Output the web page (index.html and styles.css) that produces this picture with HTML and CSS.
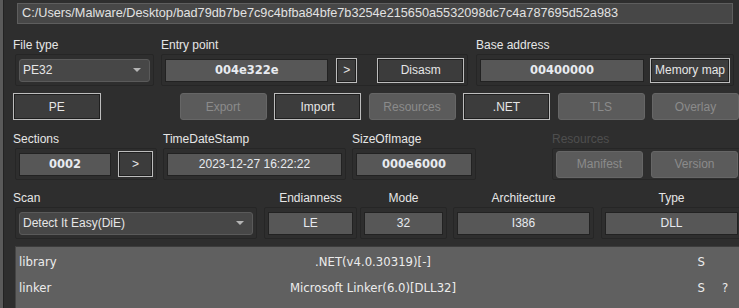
FILE: index.html
```html
<!DOCTYPE html>
<html>
<head>
<meta charset="utf-8">
<link rel="stylesheet" href="styles.css">
</head>
<body>
<div class="app">
  <div class="path">C:/Users/Malware/Desktop/bad79db7be7c9c4bfba84bfe7b3254e215650a5532098dc7c4a787695d52a983</div>

  <div class="row row-b">
    <div class="group g-filetype">
      <div class="lbl">File type</div>
      <div class="frame"><div class="combo combo-ft"><span>PE32</span><span class="arrow"></span></div></div>
    </div>
    <div class="group g-entry">
      <div class="lbl">Entry point</div>
      <div class="frame">
        <div class="val bold w-entry">004e322e</div>
        <div class="btn on b-go">&gt;</div>
        <div class="btn on b-disasm">Disasm</div>
      </div>
    </div>
    <div class="group g-base">
      <div class="lbl">Base address</div>
      <div class="frame">
        <div class="val bold w-entry">00400000</div>
        <div class="btn on b-mem">Memory map</div>
      </div>
    </div>
  </div>

  <div class="row row-c">
    <div class="btn on b-pe">PE</div>
    <div class="btn-grid">
      <div class="btn off">Export</div>
      <div class="btn on">Import</div>
      <div class="btn off">Resources</div>
      <div class="btn on">.NET</div>
      <div class="btn off">TLS</div>
      <div class="btn off">Overlay</div>
    </div>
  </div>

  <div class="row row-d">
    <div class="group g-sections">
      <div class="lbl">Sections</div>
      <div class="frame">
        <div class="val bold w-sec">0002</div>
        <div class="btn on b-sec">&gt;</div>
      </div>
    </div>
    <div class="group g-time">
      <div class="lbl">TimeDateStamp</div>
      <div class="frame"><div class="val w-time">2023-12-27 16:22:22</div></div>
    </div>
    <div class="group g-size">
      <div class="lbl">SizeOfImage</div>
      <div class="frame"><div class="val bold w-size">000e6000</div></div>
    </div>
    <div class="group g-res">
      <div class="lbl dis">Resources</div>
      <div class="frame">
        <div class="btn off b-res">Manifest</div>
        <div class="btn off b-res">Version</div>
      </div>
    </div>
  </div>

  <div class="row row-e">
    <div class="group g-scan">
      <div class="lbl">Scan</div>
      <div class="frame"><div class="combo combo-scan"><span>Detect It Easy(DiE)</span><span class="arrow"></span></div></div>
    </div>
    <div class="group g-endian">
      <div class="lbl center">Endianness</div>
      <div class="frame"><div class="val w-endian">LE</div></div>
    </div>
    <div class="group g-mode">
      <div class="lbl center">Mode</div>
      <div class="frame"><div class="val w-mode">32</div></div>
    </div>
    <div class="group g-arch">
      <div class="lbl center">Architecture</div>
      <div class="frame"><div class="val w-arch">I386</div></div>
    </div>
    <div class="group g-type">
      <div class="lbl center">Type</div>
      <div class="frame"><div class="val w-arch">DLL</div></div>
    </div>
  </div>

  <div class="results">
    <div class="res-row">
      <span class="r-name">library</span>
      <span class="r-val">.NET(v4.0.30319)[-]</span>
      <span class="r-s">S</span>
      <span class="r-q"></span>
    </div>
    <div class="res-row">
      <span class="r-name">linker</span>
      <span class="r-val">Microsoft Linker(6.0)[DLL32]</span>
      <span class="r-s">S</span>
      <span class="r-q">?</span>
    </div>
  </div>
</div>
</body>
</html>
```

FILE: styles.css
```css
html, body {
  margin: 0;
  padding: 0;
  background: #2e2e2e;
  width: 739px;
  height: 308px;
  overflow: hidden;
}

.app {
  box-sizing: border-box;
  height: 308px;
  border-left: 3px solid #5a5a5a;
  box-shadow: inset 1px 0 0 #232323;
  padding: 3px 0 0 12px;
  font-family: "Liberation Sans", Arial, sans-serif;
  font-size: 12px;
  color: #e4e4e4;
  display: flex;
  flex-direction: column;
}

.path {
  box-sizing: border-box;
  margin-left: 2px;
  width: 716px;
  height: 21px;
  line-height: 19px;
  background: #474747;
  border: 1px solid #5e5e5e;
  padding-left: 4px;
  color: #e2e2e2;
  font-size: 12.7px;
  white-space: nowrap;
  overflow: hidden;
}

.row {
  display: flex;
}

.group {
  display: flex;
  flex-direction: column;
}

.lbl {
  height: 14px;
  line-height: 14px;
  margin-bottom: 2px;
  white-space: nowrap;
  color: #e6e6e6;
}
.lbl.center { text-align: center; }
.lbl.dis { color: #4e4e4e; }

.frame {
  box-sizing: border-box;
  height: 32px;
  border: 1px solid #262626;
  border-radius: 2px;
  padding: 0 3px;
  display: flex;
  align-items: center;
}

.combo {
  box-sizing: border-box;
  height: 23px;
  background: #474747;
  border: 1px solid #5a5a5a;
  border-radius: 3px;
  display: flex;
  align-items: center;
  justify-content: space-between;
  padding: 0 8px 0 3px;
  color: #e6e6e6;
}
.arrow {
  width: 0;
  height: 0;
  border-left: 4px solid transparent;
  border-right: 4px solid transparent;
  border-top: 4px solid #b5b5b5;
}

.val {
  box-sizing: border-box;
  height: 23px;
  line-height: 21px;
  background: #575757;
  border: 1px solid #222;
  text-align: center;
  color: #e8ebf0;
  white-space: nowrap;
}
.val.bold {
  font-family: "DejaVu Sans", Verdana, sans-serif;
  font-weight: bold;
  font-size: 11.5px;
}

.btn {
  box-sizing: border-box;
  display: flex;
  align-items: center;
  justify-content: center;
  white-space: nowrap;
}
.btn.on {
  background: #3c3c3c;
  border: 1px solid #bdbdbd;
  box-shadow: inset 0 0 0 1px #1f1f1f;
  color: #e6e6e6;
}
.btn.off {
  background: #5b5b5b;
  border: 1px solid #666;
  border-radius: 3px;
  color: #8b8b8b;
}

/* Row B */
.row-b { margin-top: 14px; }
.g-filetype { width: 139px; }
.g-filetype .lbl { margin-left: -2px; }
.combo-ft { width: 131px; }
.g-entry { width: 307px; margin-left: 7px; }
.g-base { width: 258px; margin-left: 8px; }
.w-entry { width: 164px; }
.b-go { width: 21px; height: 25px; margin-left: 8px; }
.b-disasm { width: 87px; height: 25px; margin-left: 20px; }
.b-mem { width: 80px; height: 25px; margin-left: 6px; }

/* Row C */
.row-c { margin-top: 7px; height: 27px; }
.row-c .btn { height: 27px; }
.b-pe { width: 88px; margin-left: -2px; }
.btn-grid {
  display: grid;
  grid-template-columns: repeat(6, 87px);
  column-gap: 7.5px;
  margin-left: 79px;
}

/* Row D */
.row-d { margin-top: 12px; }
.g-sections { width: 142px; }
.g-sections .lbl { margin-left: -2px; }
.w-sec { width: 92px; }
.b-sec { width: 35px; height: 26px; margin-left: 7px; }
.g-time { width: 183px; margin-left: 6px; }
.w-time { width: 175px; }
.g-size { width: 124px; margin-left: 6px; }
.w-size { width: 116px; }
.g-res { width: 190px; margin-left: 76px; }
.b-res { width: 87px; height: 27px; }
.b-res + .b-res { margin-left: 8px; }

/* Row E */
.row-e { margin-top: 11px; }
.g-scan { width: 242px; }
.g-scan .lbl { margin-left: -2px; }
.combo-scan { width: 234px; }
.g-endian { width: 93px; margin-left: 7px; }
.w-endian { width: 85px; }
.g-mode { width: 87px; margin-left: 3px; }
.w-mode { width: 79px; }
.g-arch { width: 141px; margin-left: 6px; }
.g-type { width: 141px; margin-left: 7px; }
.w-arch { width: 133px; }

/* Results */
.results {
  margin-top: 7px;
  flex: 1;
  background: #606060;
  border-top: 1px solid #3c3c3c;
  border-left: 1px solid #454545;
  padding-top: 2px;
  font-family: "DejaVu Sans", Verdana, sans-serif;
  font-size: 11.7px;
}
.res-row {
  display: grid;
  grid-template-columns: 110px 494px 102px 1fr;
  height: 26px;
  align-items: center;
  color: #ececec;
}
.r-name { padding-left: 3px; }
.r-val { text-align: center; }
.r-s { text-align: right; padding-right: 17px; }
.r-q { padding-left: 0; }
```
